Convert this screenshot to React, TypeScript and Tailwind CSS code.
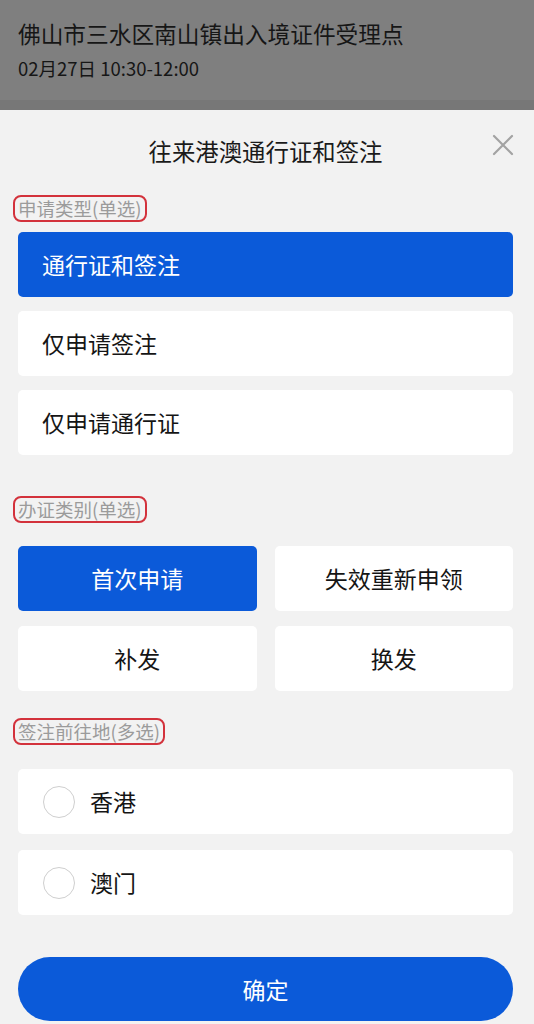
import React, { useState } from 'react';

const font = { fontFamily: '"Noto Sans CJK SC", "Noto Sans", sans-serif' };

const SectionLabel = ({ text }: { text: string }) => (
  <div className="h-[28px] flex items-center">
    <span className="-ml-[5px] px-[3px] border-2 border-[#d3323c] rounded-[8px] text-[18.5px] leading-[23px] text-[#9b9b9b]">
      {text}
    </span>
  </div>
);

const App = () => {
  const [applyType, setApplyType] = useState(0);
  const [category, setCategory] = useState(0);
  const [places, setPlaces] = useState<boolean[]>([false, false]);

  const applyTypes = ['通行证和签注', '仅申请签注', '仅申请通行证'];
  const categories = ['首次申请', '失效重新申领', '补发', '换发'];
  const destinations = ['香港', '澳门'];

  return (
    <div className="w-[534px] min-h-[1024px] bg-[#f2f2f2]" style={font}>
      {/* dimmed page behind the sheet */}
      <div className="h-[110px] bg-[#7f7f7f] flex flex-col">
        <div className="flex-1 px-[18px] pt-[18px]">
          <div className="text-[22.7px] leading-[32px] text-[#161616]">佛山市三水区南山镇出入境证件受理点</div>
          <div className="mt-[6px] text-[18.5px] leading-[24px] text-[#161616]">02月27日 10:30-12:00</div>
        </div>
        <div className="h-[10px] bg-[#777777]"></div>
      </div>

      {/* sheet */}
      <div className="relative pl-[18px] pr-[21px]">
        <div className="h-[84px] flex items-center justify-center text-[23.4px] text-[#1a1a1a]">
          往来港澳通行证和签注
        </div>
        <button className="absolute right-[20px] top-[24px] w-[22px] h-[22px] flex items-center justify-center">
          <svg width="22" height="22" viewBox="0 0 22 22" fill="none" stroke="#a3a3a3" strokeWidth="2.2" strokeLinecap="round">
            <path d="M2 2 L20 20 M20 2 L2 20" />
          </svg>
        </button>

        <SectionLabel text="申请类型(单选)" />
        <div className="mt-[10px] flex flex-col gap-[14px]">
          {applyTypes.map((t, i) => (
            <button
              key={t}
              onClick={() => setApplyType(i)}
              className={`h-[65px] rounded-[5px] pl-[24px] text-left text-[23px] ${
                applyType === i ? 'bg-[#0b5ad9] text-white' : 'bg-white text-[#151515]'
              }`}
            >
              {t}
            </button>
          ))}
        </div>

        <div className="mt-[40px]">
          <SectionLabel text="办证类别(单选)" />
        </div>
        <div className="mt-[23px] grid grid-cols-2 gap-x-[18px] gap-y-[15px]">
          {categories.map((c, i) => (
            <button
              key={c}
              onClick={() => setCategory(i)}
              className={`h-[65px] rounded-[5px] text-[23px] ${
                category === i ? 'bg-[#0b5ad9] text-white' : 'bg-white text-[#151515]'
              }`}
            >
              {c}
            </button>
          ))}
        </div>

        <div className="mt-[26px]">
          <SectionLabel text="签注前往地(多选)" />
        </div>
        <div className="mt-[24px] flex flex-col gap-[16px]">
          {destinations.map((d, i) => (
            <button
              key={d}
              onClick={() => setPlaces((p) => p.map((v, j) => (j === i ? !v : v)))}
              className="h-[65px] rounded-[5px] bg-white flex items-center pl-[25px] gap-[15px] text-[23px] text-[#151515]"
            >
              <span
                className={`w-[32px] h-[32px] rounded-full border-[1.5px] ${
                  places[i] ? 'border-[#0b5ad9] bg-[#0b5ad9]' : 'border-[#cfcfcf]'
                }`}
              ></span>
              {d}
            </button>
          ))}
        </div>

        <button className="mt-[42px] w-full h-[64px] rounded-full bg-[#0b5ad9] text-white text-[23px]">
          确定
        </button>
      </div>
    </div>
  );
};

export default App;
